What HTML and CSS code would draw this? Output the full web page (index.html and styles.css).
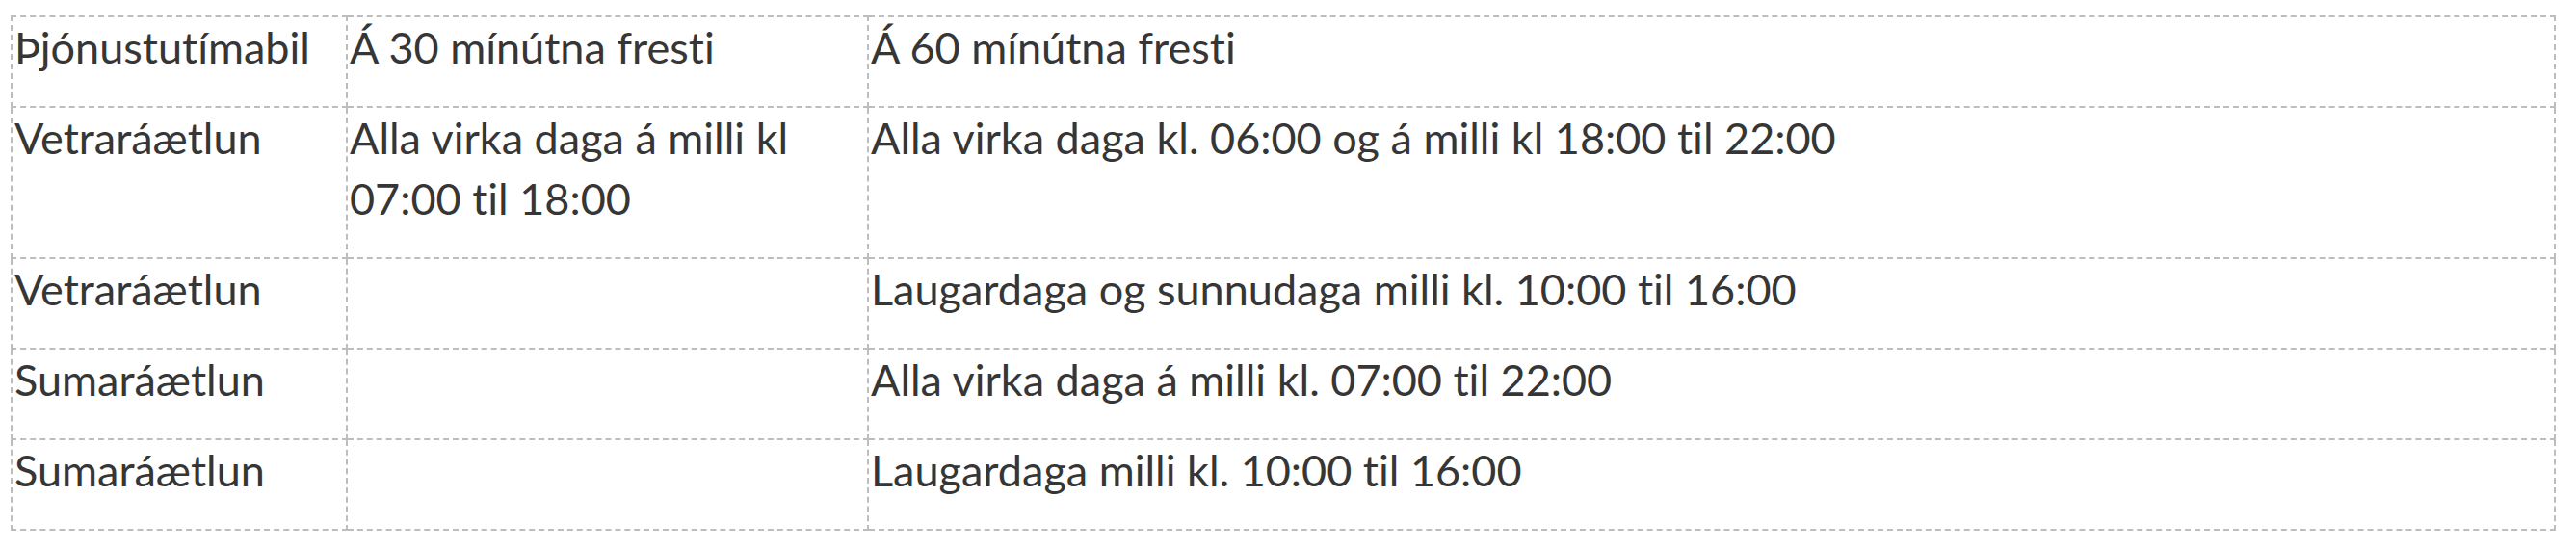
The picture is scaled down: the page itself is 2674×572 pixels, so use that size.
FILE: index.html
```html
<!DOCTYPE html>
<html lang="is">
<head>
<meta charset="utf-8">
<title>Þjónustutímabil</title>
<link rel="stylesheet" href="styles.css">
</head>
<body>
<div class="page">
  <table class="schedule">
    <colgroup>
      <col class="col-period">
      <col class="col-30">
      <col class="col-60">
    </colgroup>
    <thead>
      <tr>
        <th>Þjónustutímabil</th>
        <th>Á 30 mínútna fresti</th>
        <th>Á 60 mínútna fresti</th>
      </tr>
    </thead>
    <tbody>
      <tr>
        <td>Vetraráætlun</td>
        <td>Alla virka daga á milli kl 07:00 til 18:00</td>
        <td>Alla virka daga kl. 06:00 og á milli kl 18:00 til 22:00</td>
      </tr>
      <tr>
        <td>Vetraráætlun</td>
        <td></td>
        <td>Laugardaga og sunnudaga milli kl. 10:00 til 16:00</td>
      </tr>
      <tr>
        <td>Sumaráætlun</td>
        <td></td>
        <td>Alla virka daga á milli kl. 07:00 til 22:00</td>
      </tr>
      <tr>
        <td>Sumaráætlun</td>
        <td></td>
        <td>Laugardaga milli kl. 10:00 til 16:00</td>
      </tr>
    </tbody>
  </table>
</div>
</body>
</html>
```

FILE: styles.css
```css
html, body {
  margin: 0;
  padding: 0;
  background: #ffffff;
}

.page {
  padding: 16px 0 0 11px;
}

.schedule {
  border-collapse: collapse;
  table-layout: fixed;
  width: 2642px;
  font-family: Lato, "Noto Sans", sans-serif;
  font-size: 45px;
  line-height: 63px;
  color: #363636;
  font-variant-ligatures: none;
  font-feature-settings: "liga" 0, "clig" 0;
}

.col-period { width: 348px; }
.col-30 { width: 541px; }

.schedule th,
.schedule td {
  border: 2px dashed #bdbdbd;
  padding: 0 0 29px 2px;
  text-align: left;
  vertical-align: top;
  font-weight: 400;
}
```
